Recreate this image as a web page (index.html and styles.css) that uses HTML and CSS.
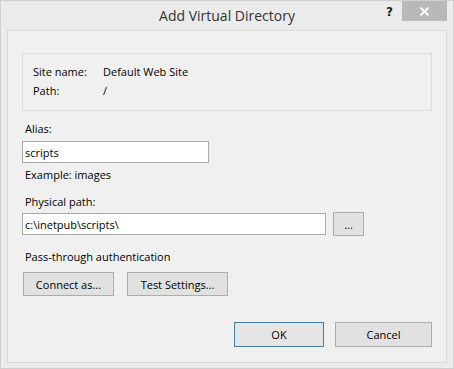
FILE: index.html
```html
<!DOCTYPE html>
<html>
  <head>
    <meta charset="utf-8" />
    <title>Add Virtual Directory</title>
    <link rel="stylesheet" href="styles.css">
  </head>
  <body>
    <div class="window">
      <div class="titlebar">
        <div class="title">Add Virtual Directory</div>
        <div class="controls">
          <span class="help">?</span>
          <span class="close">
            <svg width="11" height="9" viewBox="0 0 11 9">
              <path d="M1.5 0.5 L9.5 8.5 M9.5 0.5 L1.5 8.5" stroke="#fff" stroke-width="1.8" fill="none" />
            </svg>
          </span>
        </div>
      </div>

      <div class="client">
        <div class="info">
          <dl>
            <dt>Site name:</dt>
            <dd>Default Web Site</dd>
            <dt>Path:</dt>
            <dd>/</dd>
          </dl>
        </div>

        <label class="label alias-label" for="alias">Alias:</label>
        <input id="alias" class="field alias" value="scripts" />
        <div class="hint">Example: images</div>

        <label class="label path-label" for="physicalPath">Physical path:</label>
        <div class="path-row">
          <input id="physicalPath" class="field path" value="c:\inetpub\scripts\" />
          <button class="btn browse">...</button>
        </div>

        <div class="label auth-label">Pass-through authentication</div>
        <div class="auth-row">
          <button class="btn connect">Connect as...</button>
          <button class="btn test">Test Settings...</button>
        </div>

        <div class="footer">
          <button class="btn ok">OK</button>
          <button class="btn cancel">Cancel</button>
        </div>
      </div>
    </div>
  </body>
</html>
```

FILE: styles.css
```css
html {
  box-sizing: border-box;
}
*,
*:before,
*:after {
  box-sizing: inherit;
}
body {
  margin: 0;
  background: #ffffff;
  font-family: "Open Sans", "Liberation Sans", sans-serif;
  font-size: 11px;
  color: #000;
}
.window {
  width: 454px;
  height: 369px;
  background: #ebebeb;
  border: 1px solid #cfcfcf;
  display: flex;
  flex-direction: column;
}
.titlebar {
  height: 29px;
  display: grid;
  grid-template-columns: 1fr auto 1fr;
  align-items: start;
}
.title {
  grid-column: 2;
  font-size: 14px;
  color: #333;
  line-height: 20px;
  padding-top: 5px;
}
.controls {
  grid-column: 3;
  justify-self: end;
  display: flex;
  align-items: start;
  margin-right: 6px;
}
.help {
  font-family: "DejaVu Sans", sans-serif;
  font-weight: bold;
  font-size: 12px;
  color: #222;
  line-height: 18px;
  margin-right: 9px;
  padding-top: 2px;
}
.close {
  width: 45px;
  height: 20px;
  background: #b9b9b9;
  display: flex;
  justify-content: center;
  align-items: center;
}
.close svg {
  display: block;
}
.client {
  margin: 0 6px;
  height: 333px;
  background: #f0f0f0;
  border: 1px solid #d9d9d9;
  padding: 22px 14px 0 14px;
  display: flex;
  flex-direction: column;
  align-items: flex-start;
}
.info {
  align-self: stretch;
  height: 58px;
  border: 1px solid #dcdcdc;
  padding: 8px 10px;
}
.info dl {
  margin: 0;
  display: grid;
  grid-template-columns: 70px auto;
  line-height: 19px;
}
.info dt,
.info dd {
  margin: 0;
}
.label {
  line-height: 16px;
  padding-left: 3px;
}
.alias-label {
  margin-top: 10px;
}
.field {
  font-family: inherit;
  font-size: 11px;
  height: 22px;
  border: 1px solid #a9a9a9;
  background: #fff;
  padding: 0 0 0 2px;
  margin: 0;
  outline: none;
}
.alias {
  width: 187px;
  margin-top: 4px;
}
.hint {
  padding-left: 3px;
  line-height: 16px;
  margin-top: 4px;
}
.path-label {
  margin-top: 11px;
}
.path-row {
  display: flex;
  align-items: center;
  gap: 7px;
  margin-top: 2px;
}
.path {
  width: 304px;
}
.btn {
  font-family: inherit;
  font-size: 11px;
  color: #000;
  background: #e1e1e1;
  border: 1px solid #adadad;
  height: 24px;
  margin: 0;
  padding: 0;
}
.browse {
  width: 31px;
}
.auth-label {
  margin-top: 13px;
}
.auth-row {
  display: flex;
  gap: 13px;
  margin-top: 7px;
  padding-left: 1px;
}
.connect {
  width: 91px;
}
.test {
  width: 101px;
}
.footer {
  align-self: stretch;
  display: flex;
  justify-content: flex-end;
  gap: 11px;
  margin-top: 26px;
}
.ok {
  width: 90px;
  height: 25px;
  border-color: #3c7fb1;
  background: #e5e5e5;
}
.cancel {
  width: 97px;
  height: 25px;
}
```
